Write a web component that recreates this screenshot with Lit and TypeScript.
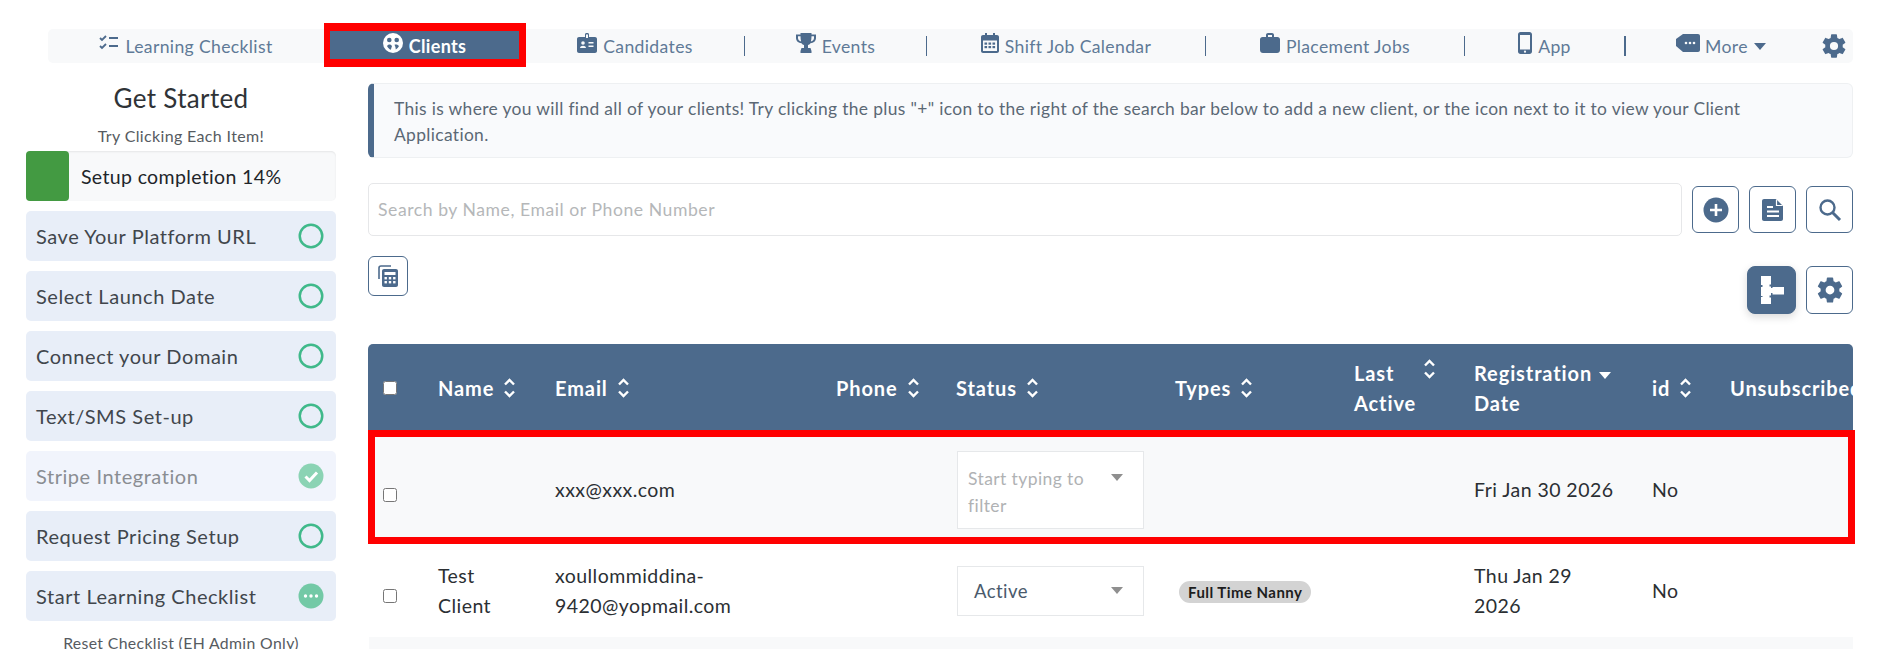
import { LitElement, html, css, svg } from "lit";
import { customElement } from "lit/decorators.js";

const gearPath =
  "M12,15.5A3.5,3.5 0 0,1 8.5,12A3.5,3.5 0 0,1 12,8.5A3.5,3.5 0 0,1 15.5,12A3.5,3.5 0 0,1 12,15.5M19.43,12.97C19.47,12.65 19.5,12.33 19.5,12C19.5,11.67 19.47,11.34 19.43,11L21.54,9.37C21.73,9.22 21.78,8.95 21.66,8.73L19.66,5.27C19.54,5.05 19.27,4.96 19.05,5.05L16.56,6.05C16.04,5.66 15.5,5.32 14.87,5.07L14.5,2.42C14.46,2.18 14.25,2 14,2H10C9.75,2 9.54,2.18 9.5,2.42L9.13,5.07C8.5,5.32 7.96,5.66 7.44,6.05L4.95,5.05C4.73,4.96 4.46,5.05 4.34,5.27L2.34,8.73C2.21,8.95 2.27,9.22 2.46,9.37L4.57,11C4.53,11.34 4.5,11.67 4.5,12C4.5,12.33 4.53,12.65 4.57,12.97L2.46,14.63C2.27,14.78 2.21,15.05 2.34,15.27L4.34,18.73C4.46,18.95 4.73,19.03 4.95,18.95L7.44,17.94C7.96,18.34 8.5,18.68 9.13,18.93L9.5,21.58C9.54,21.82 9.75,22 10,22H14C14.25,22 14.46,21.82 14.5,21.58L14.87,18.93C15.5,18.67 16.04,18.34 16.56,17.94L19.05,18.95C19.27,19.03 19.54,18.95 19.66,18.73L21.66,15.27C21.78,15.05 21.73,14.78 21.54,14.63L19.43,12.97Z";

const BLUE = "#4c6a8c";

const ico = (w: number, h: number, box: string, body: unknown) =>
  html`<svg class="ico" width=${w} height=${h} viewBox=${box} fill=${BLUE}>${body}</svg>`;

// nav icons
const icons: Record<string, () => unknown> = {
  checklist: () =>
    ico(20, 16, "0 0 20 16", svg`
      <path d="M1 3l2 2 4-4M1 11l2 2 4-4" fill="none" stroke=${BLUE} stroke-width="1.8"/>
      <rect x="10" y="2" width="9" height="2"/><rect x="10" y="10" width="9" height="2"/>`),
  clients: () =>
    html`<svg class="ico" width="20" height="20" viewBox="0 0 20 20">
      <circle cx="10" cy="10" r="10" fill="#fff"/>
      <circle cx="6.300" cy="7" r="2.300" fill=${BLUE}/>
      <circle cx="13.700" cy="7" r="2.300" fill=${BLUE}/>
      <path d="M4 13c.9-2 4-2.200 5 0-.5 1.300-.9 2.500-1.100 3.800-1.700-.6-3-2-3.900-3.800zM11.500 11.800c1.400-.8 3.400-.5 4.500 1.200-.7 1.500-1.800 2.700-3.200 3.500-.1-1.800-.5-3.300-1.300-4.700z" fill=${BLUE}/>
    </svg>`,
  badge: () =>
    ico(20, 20, "0 0 20 20", svg`
      <path d="M2 4h6V1.500C8 .7 8.600 0 9.500 0h1c.9 0 1.500.7 1.500 1.500V4h6c1.100 0 2 .9 2 2v12c0 1.100-.9 2-2 2H2c-1.100 0-2-.9-2-2V6c0-1.100.9-2 2-2z"/>
      <rect x="9" y="1.500" width="2" height="3.500" fill="#f8f9fa"/>
      <circle cx="6" cy="10" r="1.800" fill="#f8f9fa"/>
      <path d="M3 15c.3-3 5.700-3 6 0z" fill="#f8f9fa"/>
      <rect x="11.500" y="9" width="5" height="1.500" fill="#f8f9fa"/>
      <rect x="11.500" y="12.500" width="5" height="1.500" fill="#f8f9fa"/>`),
  trophy: () =>
    ico(20, 20, "0 0 20 20", svg`
      <path d="M4.500 0h11v1.500H20V5c0 3-2.500 5-5.500 5.300-.7.9-1.500 1.500-2.500 1.800V15h2.500l1 3v2h-11v-2l1-3H8v-2.900c-1-.3-1.800-.9-2.500-1.800C2.500 10 0 8 0 5V1.500h4.500zM2 3.300V5c0 1.700 1.300 3 3.100 3.400-.4-1.400-.6-3.200-.6-5.100zM18 3.300h-2.500c0 1.900-.2 3.700-.6 5.100C16.700 8 18 6.700 18 5z" fill-rule="evenodd"/>`),
  calendar: () =>
    ico(18, 20, "0 0 18 20", svg`
      <path d="M2 2h2V0h2v2h6V0h2v2h2c1.100 0 2 .9 2 2v14c0 1.100-.9 2-2 2H2c-1.100 0-2-.9-2-2V4c0-1.100.9-2 2-2zm0 5.500V18h14V7.500z" fill-rule="evenodd"/>
      ${[3.5, 7.5, 11.5].map((x) => [9.5, 13].map((y) => svg`<rect x=${x} y=${y} width="2.600" height="2.200"/>`))}`),
  briefcase: () =>
    ico(20, 20, "0 0 20 20", svg`
      <path d="M6 4V2c0-1.100.9-2 2-2h4c1.100 0 2 .9 2 2v2h3.500c1.400 0 2.500 1.100 2.500 2.500V17c0 1.700-1.300 3-3 3H3c-1.700 0-3-1.300-3-3V6.500C0 5.100 1.100 4 2.500 4zM8 2v2h4V2z" fill-rule="evenodd"/>`),
  mobile: () =>
    ico(14, 22, "0 0 14 22", svg`
      <path d="M2.500 0h9C12.900 0 14 1.100 14 2.500v17c0 1.400-1.100 2.500-2.500 2.500h-9C1.100 22 0 20.900 0 19.500v-17C0 1.100 1.100 0 2.500 0zM2 3v14.500h10V3z" fill-rule="evenodd"/>
      <circle cx="7" cy="19.700" r="1.100" fill="#f8f9fa"/>`),
  tag: () =>
    ico(24, 18, "0 0 24 18", svg`
      <path d="M7 0h15c1.100 0 2 .9 2 2v14c0 1.100-.9 2-2 2H7l-7-6V5z"/>
      <circle cx="10" cy="9" r="1.300" fill="#f8f9fa"/><circle cx="14" cy="9" r="1.300" fill="#f8f9fa"/><circle cx="18" cy="9" r="1.300" fill="#f8f9fa"/>`),
};

const caret = (fill: string) =>
  html`<svg class="caret" width="12" height="7" viewBox="0 0 12 7"><path d="M0 0h12L6 7z" fill=${fill}/></svg>`;

const sort = html`<svg class="sort" width="13" height="22" viewBox="0 0 12 22">
  <path d="M1.500 7.500 6 3l4.500 4.500M1.500 14.500 6 19l4.500-4.500" fill="none" stroke="#fff" stroke-width="2.400"/>
</svg>`;

const NAV = [
  { label: "Learning Checklist", icon: "checklist", w: 276, sep: false },
  { label: "Clients", icon: "clients", w: 202, sep: false, active: true },
  { label: "Candidates", icon: "badge", w: 219, sep: true },
  { label: "Events", icon: "trophy", w: 182, sep: true },
  { label: "Shift Job Calendar", icon: "calendar", w: 279, sep: true },
  { label: "Placement Jobs", icon: "briefcase", w: 259, sep: true },
  { label: "App", icon: "mobile", w: 161, sep: true, thick: true },
];

const STEPS = [
  { label: "Save Your Platform URL", state: "open" },
  { label: "Select Launch Date", state: "open" },
  { label: "Connect your Domain", state: "open" },
  { label: "Text/SMS Set-up", state: "open" },
  { label: "Stripe Integration", state: "done" },
  { label: "Request Pricing Setup", state: "open" },
  { label: "Start Learning Checklist", state: "pending" },
];

const stepIcon = (state: string) => {
  if (state === "done")
    return html`<svg width="26" height="26" viewBox="0 0 26 26">
      <circle cx="13" cy="13" r="12.500" fill="#8bd3b4"/>
      <path d="M7.500 13.500l4 4 7.500-8" fill="none" stroke="#fff" stroke-width="3"/>
    </svg>`;
  if (state === "pending")
    return html`<svg width="26" height="26" viewBox="0 0 26 26">
      <circle cx="13" cy="13" r="12.500" fill="#73c9a6"/>
      <circle cx="7.500" cy="13" r="1.700" fill="#fff"/><circle cx="13" cy="13" r="1.700" fill="#fff"/><circle cx="18.500" cy="13" r="1.700" fill="#fff"/>
    </svg>`;
  return html`<svg width="26" height="26" viewBox="0 0 26 26">
    <circle cx="13" cy="13" r="11.250" fill="none" stroke="#3fb98a" stroke-width="2.500"/>
  </svg>`;
};

@customElement("app-root")
export class AppRoot extends LitElement {
  static styles = css`
    :host {
      display: block;
      height: 649px;
      overflow: hidden;
      background: #fff;
      font-family: "Lato", "Open Sans", sans-serif;
      letter-spacing: 0.35px;
      color: #2f3337;
    }
    .ico { flex: none; display: block; }

    .nav {
      display: flex;
      align-items: center;
      height: 34px;
      margin: 0 27px 0 48px;
      padding-top: 29px;
      box-sizing: content-box;
    }
    .nav-bar {
      display: flex;
      align-items: center;
      flex: 1;
      height: 34px;
      background: #f8f9fa;
      border-radius: 5px;
    }
    .cell {
      flex: none;
      display: flex;
      align-items: center;
      justify-content: center;
      gap: 6px;
      height: 20px;
      box-sizing: border-box;
      color: #5f7a97;
      font-size: 17.6px;
      line-height: 20px;
    }
    .cell span { padding-top: 2px; }
    .cell .ico { margin-top: -6px; }
    .cell.sep { border-right: 1px solid #4c6a8c; }
    .cell.thick { border-right-width: 2px; }
    .cell.active {
      height: 44px;
      margin: -6px 0 -4px;
      background: #4c6a8c;
      border: solid #f00;
      border-width: 8px 7px 8px 6px;
      color: #fff;
      font-weight: 700;
      font-size: 18px;
    }
    .cell.active .ico { margin-top: -4px; }
    .more { width: 188px; gap: 5px; padding-left: 2px; }
    .more .caret { margin-left: 1px; }
    .gear { margin-left: 6px; display: block; }

    .body {
      display: flex;
      gap: 32px;
      padding: 0 27px 0 26px;
    }
    .side { flex: none; width: 310px; }
    .side h2 {
      margin: 20px 0 0;
      font-size: 26px;
      line-height: 30px;
      font-weight: 400;
      text-align: center;
    }
    .hint {
      margin-top: 13px;
      font-size: 16px;
      line-height: 20px;
      text-align: center;
      color: #565b61;
    }
    .progress {
      display: flex;
      align-items: center;
      height: 50px;
      margin-top: 5px;
      background: #f8f9fa;
      border-radius: 5px;
      box-shadow: inset 0 1px 2px rgba(0, 0, 0, 0.08);
      font-size: 19.5px;
      color: #212529;
    }
    .progress i {
      width: 43px;
      height: 50px;
      margin-right: 12px;
      background: #439a42;
      border-radius: 4px;
    }
    .step {
      display: flex;
      align-items: center;
      justify-content: space-between;
      height: 50px;
      margin-top: 10px;
      padding: 0 12px 0 10px;
      box-sizing: border-box;
      background: #e8eef8;
      border-radius: 5px;
      font-size: 20px;
      letter-spacing: 0.55px;
      color: #41464c;
    }
    .step svg { display: block; }
    .step.done { background: #f1f4fc; color: #8a8d92; }
    .reset {
      margin-top: 12px;
      font-size: 15.8px;
      line-height: 20px;
      text-align: center;
      color: #565b61;
    }

    .main { flex: 1; min-width: 0; }
    .alert {
      margin-top: 20px;
      height: 75px;
      box-sizing: border-box;
      padding: 12px 30px 0 20px;
      background: #f9fafc;
      border: 1px solid #eef0f2;
      border-left: 6px solid #4c6a8c;
      border-radius: 6px;
      font-size: 17.4px;
      line-height: 26px;
      color: #5b6875;
    }
    .search {
      display: flex;
      align-items: center;
      gap: 10px;
      margin-top: 25px;
    }
    .input {
      flex: 1;
      height: 53px;
      box-sizing: border-box;
      display: flex;
      align-items: center;
      padding-left: 9px;
      border: 1px solid #e6e7e9;
      border-radius: 5px;
      font-size: 17.6px;
      letter-spacing: 0.55px;
      color: #b5b7b9;
    }
    .btn {
      flex: none;
      display: flex;
      align-items: center;
      justify-content: center;
      width: 47px;
      height: 47px;
      box-sizing: border-box;
      background: #fff;
      border: 1px solid #4c6a8c;
      border-radius: 6px;
    }
    .tools {
      display: flex;
      justify-content: space-between;
      margin-top: 20px;
      height: 58px;
    }
    .btn.small { width: 40px; height: 40px; }
    .tools-right { display: flex; gap: 10px; margin-top: 10px; }
    .tools-right .btn { height: 48px; }
    .btn.solid {
      width: 49px;
      background: #4c6a8c;
      border-radius: 8px;
      box-shadow: 0 3px 8px rgba(0, 0, 0, 0.15);
    }

    .table { margin-top: 30px; }
    .row {
      position: relative;
      display: grid;
      grid-template-columns: 55px 117px 281px 120px 219px 179px 120px 178px 78px 300px;
      align-items: center;
      font-size: 19.5px;
      letter-spacing: 0.45px;
      line-height: 30px;
      color: #2b2f33;
    }
    .row > div { padding-left: 15px; box-sizing: border-box; min-width: 0; }
    .row input { display: block; width: 14px; height: 14px; margin: 10px 0 0; }
    .head {
      height: 86px;
      padding-top: 2px;
      box-sizing: border-box;
      overflow: hidden;
      background: #4c6a8c;
      border-radius: 5px 5px 0 0;
      color: #fff;
      font-weight: 700;
      font-size: 20px;
      letter-spacing: 0.9px;
    }
    .head input { margin: 0; }
    .head > div { display: flex; align-items: center; gap: 9px; white-space: nowrap; }
    .head .sort { flex: none; }
    .head .wide { align-items: flex-start; gap: 0; }
    .head .wide span { width: 69px; }
    .head .reg { display: block; }
    .head .reg .caret { margin-left: 7px; vertical-align: 2px; }
    .first { height: 114px; padding-top: 6px; box-sizing: border-box; background: #f8f9fa; }
    .second { height: 93px; }
    .third { height: 12px; background: #f8f9fa; margin-left: 1px; }
    .mark {
      position: absolute;
      inset: 0 -2px 0 0;
      border: 7px solid #f00;
      pointer-events: none;
    }
    .select {
      display: flex;
      justify-content: space-between;
      width: 187px;
      margin-left: 1px;
      box-sizing: border-box;
      background: #fff;
      border: 1px solid #e6e8ea;
    }
    .select .caret { flex: none; margin-top: 9px; }
    .select.empty {
      height: 78px;
      padding: 13px 20px 0 10px;
      font-size: 17.5px;
      letter-spacing: 0.4px;
      line-height: 27px;
      color: #b0b2b4;
    }
    .select.empty span { width: 125px; }
    .select.filled {
      align-items: center;
      height: 50px;
      padding: 0 20px 0 16px;
      font-size: 18.5px;
      color: #4a5a6c;
    }
    .select.filled .caret { margin-top: 0; }
    .chip {
      display: inline-block;
      margin-left: 4px;
      padding: 0 9px;
      height: 22px;
      background: #d3d3d3;
      border-radius: 11px;
      font-size: 15px;
      line-height: 22px;
      font-weight: 700;
      white-space: nowrap;
      color: #1d1d1d;
    }
  `;

  private renderNavCell(n: (typeof NAV)[number]) {
    const cls = `cell ${n.sep ? "sep" : ""} ${n.thick ? "thick" : ""} ${n.active ? "active" : ""}`;
    return html`<div class=${cls} style="width:${n.w}px">
      ${icons[n.icon]()}<span>${n.label}</span>
    </div>`;
  }

  render() {
    return html`
      <div class="nav">
        <div class="nav-bar">
          ${NAV.map((n) => this.renderNavCell(n))}
          <div class="cell more">${icons.tag()}<span>More</span>${caret(BLUE)}</div>
          <svg class="gear" width="28" height="28" viewBox="0 0 24 24" fill=${BLUE}><path d=${gearPath}/></svg>
        </div>
      </div>

      <div class="body">
        <aside class="side">
          <h2>Get Started</h2>
          <div class="hint">Try Clicking Each Item!</div>
          <div class="progress"><i></i>Setup completion 14%</div>
          ${STEPS.map(
            (s) => html`<div class="step ${s.state}"><span>${s.label}</span>${stepIcon(s.state)}</div>`,
          )}
          <div class="reset">Reset Checklist (EH Admin Only)</div>
        </aside>

        <main class="main">
          <div class="alert">
            This is where you will find all of your clients! Try clicking the plus "+" icon to the right of the search bar below to add a new client, or the icon next to it to view your Client Application.
          </div>

          <div class="search">
            <div class="input">Search by Name, Email or Phone Number</div>
            <div class="btn">
              <svg width="26" height="26" viewBox="0 0 26 26">
                <circle cx="13" cy="13" r="12.500" fill=${BLUE}/>
                <path d="M13 7v12M7 13h12" stroke="#fff" stroke-width="2.600"/>
              </svg>
            </div>
            <div class="btn">
              <svg width="24" height="24" viewBox="0 0 24 24" fill=${BLUE}>
                <path d="M3 1h12l7 7v13c0 1.100-.9 2-2 2H3c-1.100 0-2-.9-2-2V3c0-1.100.9-2 2-2z"/>
                <path d="M15.500 1.500v6h6" fill="none" stroke="#fff" stroke-width="1.200"/>
                <path d="M6 9h6M6 13.500h12M6 18h12" stroke="#fff" stroke-width="2"/>
              </svg>
            </div>
            <div class="btn">
              <svg width="24" height="24" viewBox="0 0 24 24">
                <circle cx="9.500" cy="9.500" r="7" fill="none" stroke=${BLUE} stroke-width="2.400"/>
                <path d="M14.500 14.500l7.500 7.500" stroke=${BLUE} stroke-width="3"/>
              </svg>
            </div>
          </div>

          <div class="tools">
            <div class="btn small">
              <svg width="20" height="22" viewBox="0 0 20 22" fill=${BLUE}>
                <path d="M1 14V3c0-1.100.9-2 2-2h10" fill="none" stroke=${BLUE} stroke-width="1.600"/>
                <path d="M6 4h12c1.100 0 2 .9 2 2v14c0 1.100-.9 2-2 2H6c-1.100 0-2-.9-2-2V6c0-1.100.9-2 2-2z"/>
                <rect x="6.500" y="7" width="11" height="3" fill="#fff"/>
                ${[6.5, 10.8, 15.1].map((x) =>
                  [12, 16].map((y) => svg`<rect x=${x} y=${y} width="2.400" height="2.400" fill="#fff"/>`),
                )}
              </svg>
            </div>
            <div class="tools-right">
              <div class="btn solid">
                <svg width="24" height="28" viewBox="0 0 24 28" fill="#fff">
                  <path d="M1 0h10v8.500H9.500v2H11V12h1.500v-1H24v7.500H12.500V17H11v2.500H9.500v2H11V28H1v-7h1.500v-1H1v-9h1.500V9H1z"/>
                </svg>
              </div>
              <div class="btn">
                <svg width="30" height="30" viewBox="0 0 24 24" fill=${BLUE}><path d=${gearPath}/></svg>
              </div>
            </div>
          </div>

          <div class="table">
            <div class="row head">
              <div><input type="checkbox" /></div>
              <div>Name ${sort}</div>
              <div>Email ${sort}</div>
              <div>Phone ${sort}</div>
              <div>Status ${sort}</div>
              <div>Types ${sort}</div>
              <div class="wide"><span>Last<br />Active</span>${sort}</div>
              <div class="reg">Registration${caret("#fff")}<br />Date</div>
              <div>id ${sort}</div>
              <div>Unsubscribed</div>
            </div>

            <div class="row first">
              <div><input type="checkbox" /></div>
              <div></div>
              <div>xxx@xxx.com</div>
              <div></div>
              <div>
                <div class="select empty"><span>Start typing to filter</span>${caret("#8f8f8f")}</div>
              </div>
              <div></div>
              <div></div>
              <div>Fri Jan 30 2026</div>
              <div>No</div>
              <div></div>
              <span class="mark"></span>
            </div>

            <div class="row second">
              <div><input type="checkbox" /></div>
              <div>Test<br />Client</div>
              <div>xoullommiddina-<br />9420@yopmail.com</div>
              <div></div>
              <div>
                <div class="select filled"><span>Active</span>${caret("#8f8f8f")}</div>
              </div>
              <div><span class="chip">Full Time Nanny</span></div>
              <div></div>
              <div>Thu Jan 29<br />2026</div>
              <div>No</div>
              <div></div>
            </div>
            <div class="third"></div>
          </div>
        </main>
      </div>
    `;
  }
}
